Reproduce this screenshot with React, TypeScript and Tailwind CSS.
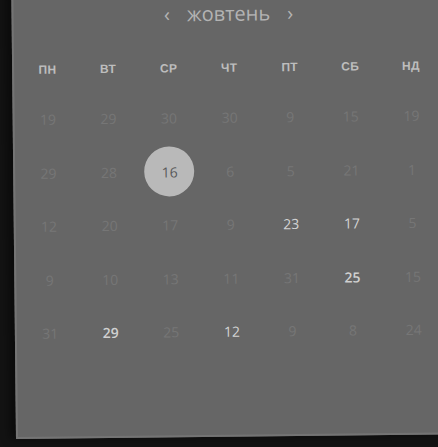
import React from 'react';

type Day = { n: number; tone?: 'faded' | 'bright' | 'bold' | 'selected' };

const weekdays = ['ПН', 'ВТ', 'СР', 'ЧТ', 'ПТ', 'СБ', 'НД'];

const f = (n: number): Day => ({ n, tone: 'faded' });

// weeks as they show in the picture
const weeks: Day[][] = [
    [f(19), f(29), f(30), f(30), f(9), f(15), f(19)],
    [f(29), f(28), { n: 16, tone: 'selected' }, f(6), f(5), f(21), f(1)],
    [f(12), f(20), f(17), f(9), { n: 23, tone: 'bright' }, { n: 17, tone: 'bright' }, f(5)],
    [f(9), f(10), f(13), f(11), f(31), { n: 25, tone: 'bold' }, f(15)],
    [f(31), { n: 29, tone: 'bold' }, f(25), { n: 12, tone: 'bright' }, f(9), f(8), f(24)],
];

const DayCell: React.FC<{ day: Day }> = ({ day }) => {
    if (day.tone === 'selected') {
        return (
            <div className="flex items-center justify-center h-[53.5px]">
                <div className="w-[50px] h-[50px] rounded-full bg-[#b9b9b9] flex items-center justify-center text-[14px] text-[#5a5a5a]">
                    {day.n}
                </div>
            </div>
        );
    }
    const cls =
        day.tone === 'bright'
            ? 'text-[#d4d4d4]'
            : day.tone === 'bold'
            ? 'text-[#d0d0d0] font-semibold'
            : 'text-[#767676]';
    return (
        <div className={`flex items-center justify-center h-[53.5px] text-[14px] ${cls}`}>
            {day.n}
        </div>
    );
};

const App: React.FC = () => {
    return (
        <div className="w-[438px] h-[447px] overflow-hidden bg-[#131313] relative font-['Open_Sans','Lato',sans-serif]">
            {/* calendar sheet, tilted a little */}
            <div className="absolute left-[16px] top-[-20px] w-[440px] h-[459px] origin-bottom-left -rotate-[0.6deg] bg-[#666666] border-l-2 border-b-2 border-[#747474] shadow-[-6px_0_10px_rgba(0,0,0,0.45)]">
                <div className="pt-[22px] pl-[3px] w-[427px]">
                    {/* month header */}
                    <div className="flex items-center justify-center gap-[17px] h-[30px] text-[#b3b3b3]">
                        <span className="text-[20px] leading-none pb-[3px]">‹</span>
                        <span className="text-[20px] leading-none pb-[2px]">жовтень</span>
                        <span className="text-[20px] leading-none pb-[3px]">›</span>
                    </div>

                    {/* weekday labels */}
                    <div className="grid grid-cols-7 mt-[22px] h-[32px] items-center font-['Liberation_Sans',sans-serif]">
                        {weekdays.map((w) => (
                            <div key={w} className="text-center text-[12px] font-bold text-[#bdbdbd] tracking-[0.3px]">
                                {w}
                            </div>
                        ))}
                    </div>

                    {/* days */}
                    <div className="mt-[7px]">
                        {weeks.map((week, i) => (
                            <div key={i} className="grid grid-cols-7">
                                {week.map((d, j) => (
                                    <DayCell key={j} day={d} />
                                ))}
                            </div>
                        ))}
                    </div>
                </div>
            </div>
        </div>
    );
};

export default App;
